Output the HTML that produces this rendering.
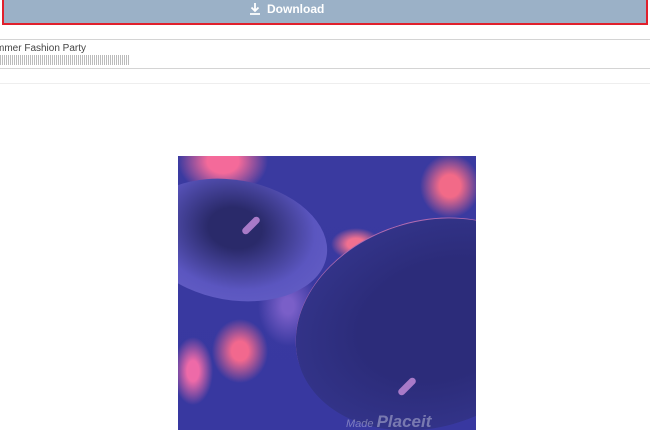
<!DOCTYPE html>
<html><head><style>
html{overflow:hidden}
body{margin:0;width:650px;height:430px;overflow:hidden;background:#fff;font-family:"Liberation Sans",sans-serif;position:relative}
.btn{position:absolute;left:2px;top:-2px;width:642px;height:23px;border:2px solid #e0202c;background:#9bb1c7;color:#fff;font-weight:bold;font-size:12px;line-height:19px;box-sizing:content-box}
.btn span{position:absolute;left:245px;top:0;white-space:nowrap}
.btn svg{vertical-align:-2px;margin-right:6px}
.l{position:absolute;left:0;width:650px;height:1px;background:#d4d4d4}
.t{position:absolute;left:-4px;top:43px;font-size:10px;color:#444}
.w{position:absolute;left:0;top:55px;width:130px;height:10px;background:repeating-linear-gradient(90deg,#bbb 0 1px,#fff 1px 2px)}
.img{position:absolute;left:178px;top:156px;width:298px;height:274px;overflow:hidden;background:#3a3c9c;
background-image:
radial-gradient(ellipse 45px 35px at 45px 5px,#f46a9a 35%,transparent 100%),
radial-gradient(ellipse 30px 32px at 272px 30px,#f26a88 35%,transparent 100%),
radial-gradient(ellipse 25px 16px at 178px 88px,#f07090 35%,transparent 100%),
radial-gradient(ellipse 28px 32px at 62px 195px,#f2688e 30%,transparent 100%),
radial-gradient(ellipse 20px 34px at 15px 215px,#ee6aa8 30%,transparent 100%),
radial-gradient(ellipse 30px 40px at 110px 150px,#7a5fc8 20%,transparent 100%),
linear-gradient(#3a3aa0,#3838a0)}
.c1{position:absolute;left:-40px;top:24px;width:190px;height:120px;border-radius:50%;background:radial-gradient(ellipse at 50% 40%,#2a2a6a 20%,#5b56c0 60%,#6a64c8 100%);transform:rotate(10deg)}
.c2{position:absolute;left:115px;top:65px;width:270px;height:205px;border-radius:50%;background:radial-gradient(ellipse at 55% 50%,#2c2c7a 40%,#34358c 80%);border-top:1px solid #b06ab0;transform:rotate(-18deg)}
.mk{position:absolute;width:22px;height:7px;border-radius:4px;background:#a87ac8;transform:rotate(-45deg)}
.wm{position:absolute;left:168px;top:258px;color:rgba(255,255,255,.35);font-size:11px;font-style:italic;line-height:16px}
.wm b{font-size:17px}
</style></head><body>
<div class="btn"><span><svg width="12" height="13" viewBox="0 0 12 13"><path d="M6 1v8M2.5 5.5L6 9l3.5-3.5M1 12h10" stroke="#fff" stroke-width="1.8" fill="none"/></svg>Download</span></div>
<div class="l" style="top:39px"></div>
<div class="t">mmer Fashion Party</div>
<div class="w"></div>
<div class="l" style="top:68px"></div>
<div class="l" style="top:83px;background:#eee"></div>
<div class="img">
<div class="c1"></div>
<div class="c2"></div>
<div class="mk" style="left:62px;top:66px"></div>
<div class="mk" style="left:218px;top:227px"></div>
<div class="wm">Made <b>Placeit</b></div>
</div>
</body></html>
